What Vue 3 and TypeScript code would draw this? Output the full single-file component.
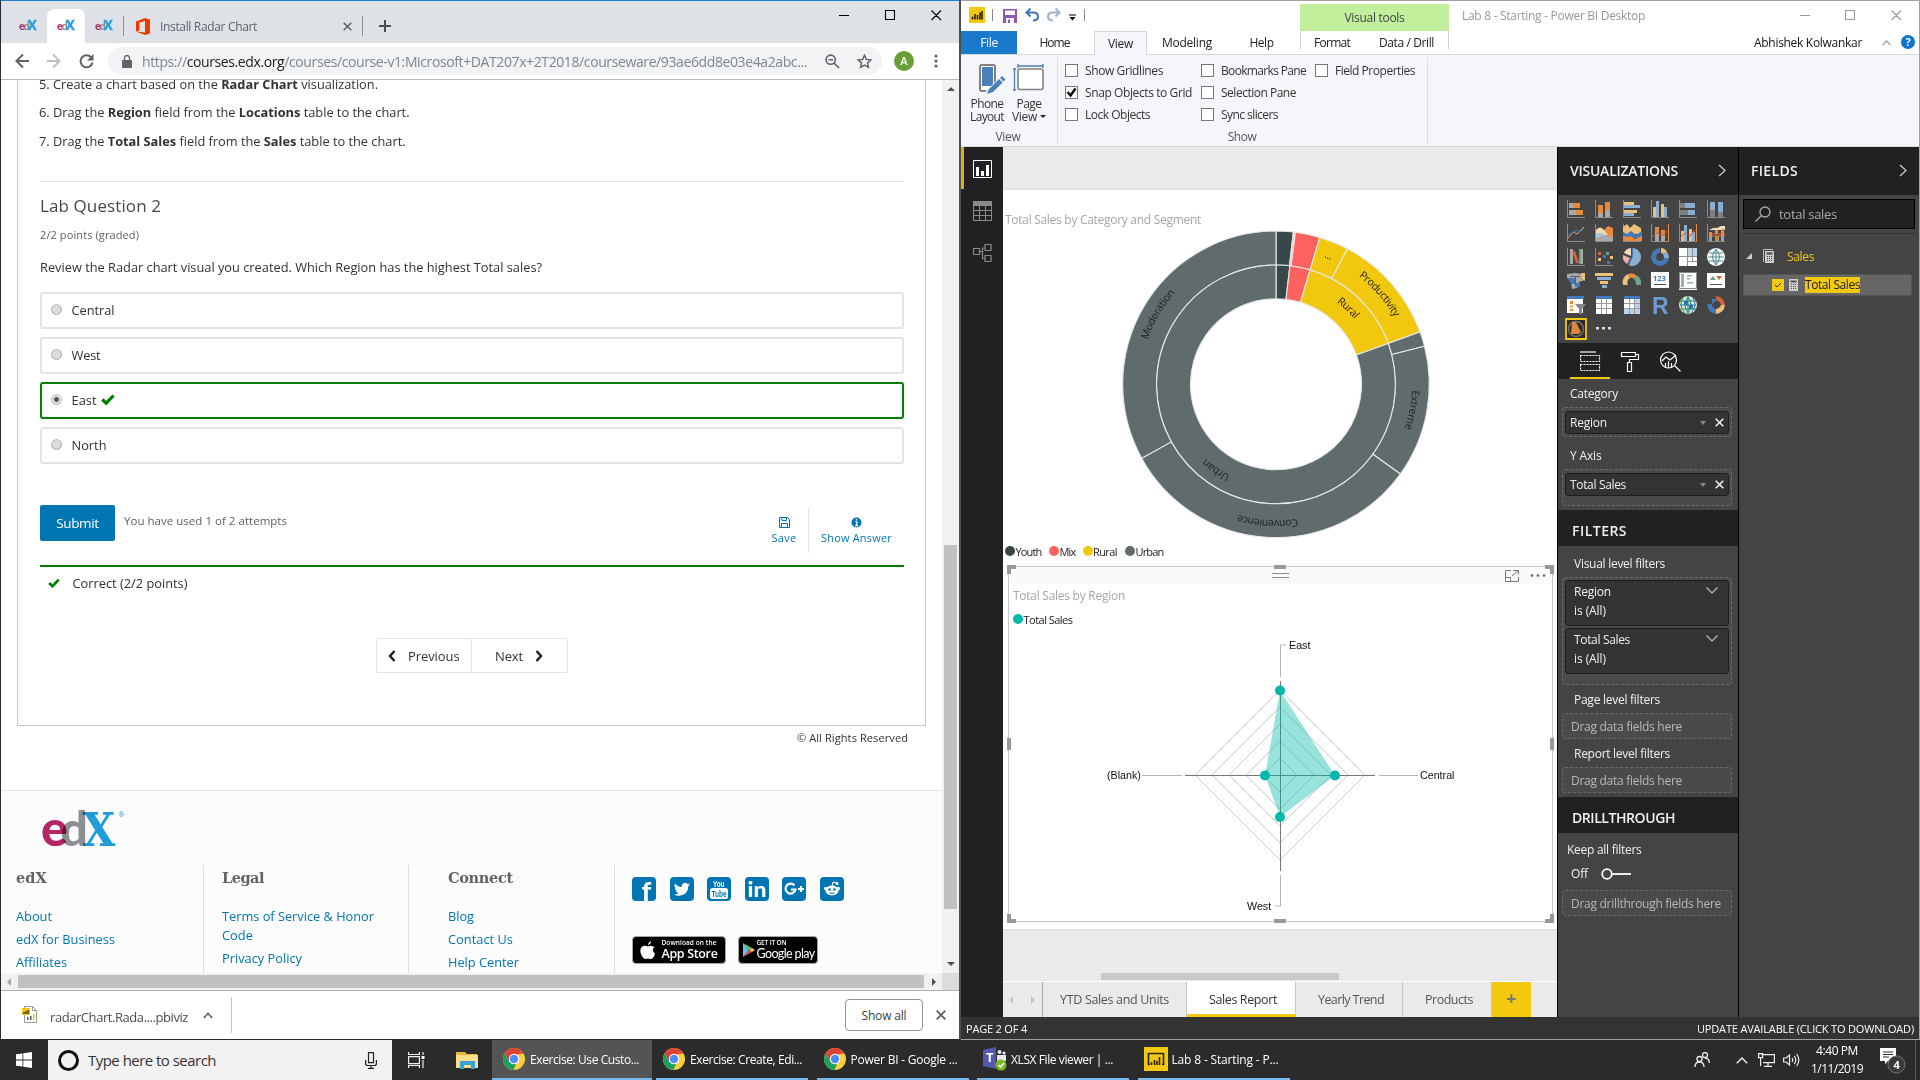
<script setup lang="ts">
type Shape = [kind: 'f' | 's', color: string, d: string]

// Spreads or tightens a label's tracking so that it takes the given width.
const vFit = {
  mounted(el: HTMLElement, binding: { value: number }) {
    const range = document.createRange()
    range.selectNodeContents(el)
    const natural = range.getBoundingClientRect().width
    const count = (el.textContent ?? '').trim().length
    if (count > 0) el.style.letterSpacing = `${((binding.value - natural) / count).toFixed(3)}px`
  },
}

const options = [
  { label: 'Central', width: 43, picked: false },
  { label: 'West', width: 29, picked: false },
  { label: 'East', width: 25, picked: true },
  { label: 'North', width: 35, picked: false },
]

const tasks = [
  { label: 'Exercise: Use Custo...', kind: 'browser', active: true, w: 160, t: 109 },
  { label: 'Exercise: Create, Edi...', kind: 'browser', active: false, w: 152, t: 112 },
  { label: 'Power BI - Google ...', kind: 'browser', active: false, w: 152, t: 107 },
  { label: 'XLSX File viewer | ...', kind: 'teams', active: false, w: 152, t: 102 },
  { label: 'Lab 8 - Starting - P...', kind: 'report', active: false, w: 152, t: 107 },
]

const ribbonChecks = [
  { w: 136, items: [
    { label: 'Show Gridlines', t: 78, on: false },
    { label: 'Snap Objects to Grid', t: 107, on: true },
    { label: 'Lock Objects', t: 65, on: false },
  ] },
  { w: 114, items: [
    { label: 'Bookmarks Pane', t: 85, on: false },
    { label: 'Selection Pane', t: 75, on: false },
    { label: 'Sync slicers', t: 57, on: false },
  ] },
  { w: 112, items: [{ label: 'Field Properties', t: 80, on: false }] },
]

const O = '#e8893c', G = '#a9a9a9', D = '#808080', Y = '#ecc079', B = '#8aaed2', K = '#4379b8', W = '#ffffff', R = '#d9603b', T = '#6fa287'
const axes: Shape = ['s', '#8c8c8c', 'M.5 0V17.5H18']

const vizIcons: Shape[][] = [
  [axes, ['f', G, 'M2 3h4v5H2zM2 10h7v5H2z'], ['f', O, 'M6 3h7v5H6zM9 10h7v5H9z']],
  [axes, ['f', G, 'M3 13h5v4H3zM10 10h5v7h-5z'], ['f', O, 'M3 5h5v8H3zM10 2h5v8h-5z']],
  [axes, ['f', Y, 'M1 2h10v3H1zM1 10h13v3H1z'], ['f', B, 'M1 5h16v3H1zM1 13h10v3H1z']],
  [axes, ['f', Y, 'M2 7h3v10H2zM10 4h3v13h-3z'], ['f', B, 'M5 1h3v16H5zM13 7h3v10h-3z']],
  [axes, ['f', D, 'M1 3h5v5H1zM1 10h8v5H1z'], ['f', B, 'M6 3h10v5H6zM9 10h7v5H9z']],
  [axes, ['f', D, 'M3 10h5v7H3zM11 12h5v5h-5z'], ['f', B, 'M3 2h5v8H3zM11 2h5v10h-5z']],

  [axes, ['s', '#e09a86', 'M1 14l5-6 4 2 7-7'], ['s', K, 'M1 11l5-3 4-2 3 2 4-4']],
  [axes, ['f', O, 'M9 6l4-4 5 2v9H9z'], ['f', '#f4d9b0', 'M1 6q4-5 8 0l4 5H1z'], ['f', '#a9c7e4', 'M1 10q6-3 10 2l7 5H1z'], ['f', G, 'M1 14l9-3 8 2v4H1z']],
  [axes, ['f', Y, 'M0 3l4-3 3 4 4-4 7 4v6H0z'], ['f', K, 'M0 8l4 2 4-3 5 4 6-4v7H0z'], ['f', O, 'M0 12l5 1 3-1 4 3 7-3v5H0z']],
  [axes, ['f', G, 'M4 9h4v8H4zM10 12h4v5h-4z'], ['f', O, 'M4 3h4v6H4zM10 6h4v6h-4zM17 0h1v18h-1z'], ['s', '#cc5a3a', 'M1 13l5-4 5 3 5-5']],
  [axes, ['f', Y, 'M2 7h3v10H2zM10 5h3v12h-3z'], ['f', B, 'M5 1h3v16H5zM13 8h3v9h-3z'], ['f', O, 'M17 0h1v18h-1z'], ['s', '#cc5a3a', 'M1 14l5-5 5 3 5-6']],
  [axes, ['f', '#f0dcc0', 'M2 6l4-2h4l4-2h4v4H2z'], ['f', '#8c5a46', 'M2 9h16v4H2z'], ['f', O, 'M2 8h3v5H2zM8 6h3v4H8zM14 5h3v7h-3z'], ['f', '#7fa8cf', 'M2 13h3v4H2zM14 12h3v5h-3z'], ['f', '#c9893f', 'M8 12h4v5H8z']],

  [axes, ['f', G, 'M3 1h3v15H3z'], ['f', R, 'M5 3h3l4 12H9z'], ['f', T, 'M12 1h2v15h-2z'], ['f', G, 'M14 1h2v15h-2z']],
  [axes, ['f', R, 'M3 4h3v3H3z'], ['f', T, 'M11 4h3v3h-3z'], ['f', Y, 'M3 10h3v3H3zM15 8h3v3h-3z'], ['f', K, 'M8 7h3v3H8zM12 13h3v3h-3z']],
  [['f', B, 'M9 0a9 9 0 1 1-3 17.500L9 9z'], ['f', '#f3dcb6', 'M8 0v8L1 5a8 8 0 0 1 7-5z'], ['f', '#ecb3a5', 'M0 7l7 3-3 6a9 9 0 0 1-4-9z'], ['f', K, 'M9 0h1v9L5 17l-1-1 5-7z']],
  [['f', K, 'M9 0v5a4 4 0 1 0 4 5h5A9 9 0 1 1 9 0z'], ['f', Y, 'M10 0q4 0 6 4l-4 2q-1-1-2-1z'], ['f', B, 'M16 4q2 3 2 6h-5q0-2-1-4z']],
  [['f', W, 'M0 0h18v18H0z'], ['f', '#bcd3ea', 'M8 0h10v8H8z'], ['s', '#8f8f8f', 'M8.5 0v18M0 8.500h18M13.500 0v13M8 13.500h10']],
  [['f', W, 'M9 0a9 9 0 1 1 0 18A9 9 0 1 1 9 0z'], ['s', '#4d8a8f', 'M9 1v16M1 9h16M2 5h14M2 13h14M9 1Q2 9 9 17Q16 9 9 1']],

  [['f', G, 'M0 2l8-1 8 1 2 6-6 2-2 6-5 1-1-8-4-3z'], ['f', K, 'M1 6h7v6H4zM8 11h5v4H8z'], ['f', Y, 'M14 1h4v8l-3-2z'], ['f', '#5b5b5b', 'M3 4h10v1H3zM8 5h1v8H8z']],
  [['f', Y, 'M0 1h18v3H0zM5 9h8v3H5z'], ['f', B, 'M2 5h14v3H2zM7 13h5v3H7z']],
  [['f', Y, 'M0 13A9 9 0 0 1 5 2l2 4a5 5 0 0 0-2 7z'], ['f', O, 'M5 2q5-2 9 2l-3 3q-2-2-4-1z'], ['f', T, 'M14 3q5 4 4 10h-5q0-4-2-6z']],
  [['f', W, 'M0 0h18v16H0z'], ['f', '#4a4a4a', 'M3 12h12v1H3z']],
  [['f', W, 'M0 0h18v18H0z'], ['f', G, 'M2 2h3v13H2z'], ['f', B, 'M8 3h5v1.500H8zM8 6h3v1.500H8zM8 10h6v1.500H8z'], ['s', '#888', 'M.5.5h17v16H.5z']],
  [['f', W, 'M0 1h18v15H0z'], ['f', T, 'M3 8l3-4 3 4z'], ['f', R, 'M9 4h6l-3 4z'], ['f', '#555', 'M3 12h12v1H3z']],

  [['f', W, 'M0 0h16v17H0z'], ['f', K, 'M0 0h17v3H0z'], ['f', O, 'M3 5h3v3H3zM3 13h3v2H3z'], ['f', Y, 'M3 9h3v3H3z'], ['f', '#888', 'M8 8h11l-4 5v5h-3v-5z']],
  [['f', W, 'M1 0h16v18H1z'], ['f', K, 'M1 0h16v3H1z'], ['s', '#9a9a9a', 'M1 7.500h16M1 12.500h16M6.500 3v15M11.500 3v15']],
  [['f', W, 'M1 0h16v18H1z'], ['f', K, 'M1 0h16v3H1z'], ['f', '#bcd3ea', 'M12 3h5v15H1v-5h11z'], ['s', '#9a9a9a', 'M1 7.500h16M1 12.500h16M6.500 3v15M11.500 3v15']],
  [],
  [['f', '#d9ead8', 'M9 0a9 9 0 1 1 0 18A9 9 0 1 1 9 0z'], ['s', '#2f8f4f', 'M9 0v18M1 5h16M1 13h16M4 2q-5 8 2 15'], ['s', '#2c75b5', 'M1 9h16M9 1Q3 9 9 17Q15 9 9 1M14 2q5 8-2 15'], ['f', '#2c75b5', 'M5 5h4v4H5zM10 9h4v4h-4z']],
  [['f', R, 'M9 0q8 1 9 9l-4 0q-1-4-5-5z'], ['f', K, 'M11 3h-6v5zM0 8h5q0 4 4 5v5Q1 17 0 8z'], ['f', Y, 'M14 9h4q-1 8-9 9v-5q4-1 5-4z']],
]

const CX = 273
const CY = 156.300
const point = (r: number, deg: number) => {
  const a = (deg * Math.PI) / 180
  return `${(CX + r * Math.sin(a)).toFixed(2)} ${(CY - r * Math.cos(a)).toFixed(2)}`
}
const ringSlice = (r0: number, r1: number, a0: number, a1: number) => {
  const large = a1 - a0 > 180 ? 1 : 0
  return `M${point(r1, a0)}A${r1} ${r1} 0 ${large} 1 ${point(r1, a1)}L${point(r0, a1)}A${r0} ${r0} 0 ${large} 0 ${point(r0, a0)}Z`
}
const slate = '#5f6b6d', dark = '#374649', coral = '#fd625e', gold = '#f2c80f'
const inner = [
  { from: 0, to: 6.7, color: dark, label: '' },
  { from: 6.7, to: 16.6, color: coral, label: '' },
  { from: 16.6, to: 70, color: gold, label: 'Rural' },
  { from: 70, to: 360, color: slate, label: 'Urban' },
]
const outer = [
  { from: 0, to: 6.5, color: dark, label: '' },
  { from: 6.5, to: 7.3, color: '#fbb', label: '' },
  { from: 7.3, to: 16.6, color: coral, label: '' },
  { from: 16.6, to: 27.8, color: gold, label: '...' },
  { from: 27.8, to: 70, color: gold, label: 'Productivity' },
  { from: 70, to: 75.6, color: slate, label: '' },
  { from: 75.6, to: 125.8, color: slate, label: 'Extreme' },
  { from: 125.8, to: 241.2, color: slate, label: 'Convenience' },
  { from: 241.2, to: 360, color: slate, label: 'Moderation' },
]
const slices = [
  ...inner.map((s, i) => ({ ...s, id: `in${i}`, d: ringSlice(85.5, 119.5, s.from, s.to), r: 102 })),
  ...outer.map((s, i) => ({ ...s, id: `out${i}`, d: ringSlice(119.5, 153.3, s.from, s.to), r: 136 })),
]
const labelArc = (s: { from: number; to: number; r: number }) => {
  const mid = (s.from + s.to) / 2
  return `M${point(s.r, mid - 60)}A${s.r} ${s.r} 0 0 1 ${point(s.r, mid + 60)}`
}
const labelled = slices.filter((s) => s.label)

const legend = [
  { label: 'Youth', color: dark, w: 26, gap: 7.5 },
  { label: 'Mix', color: coral, w: 16, gap: 7 },
  { label: 'Rural', color: gold, w: 24, gap: 8 },
  { label: 'Urban', color: slate, w: 28, gap: 0 },
]

const rings = [17, 34, 51, 68, 85]
const pages = [
  { label: 'YTD Sales and Units', w: 144, t: 109, active: false },
  { label: 'Sales Report', w: 109, t: 68, active: true },
  { label: 'Yearly Trend', w: 107, t: 66, active: false },
  { label: 'Products', w: 89, t: 48, active: false },
]
const footerCols = [
  { title: 'edX', tw: 31, cls: 'c1', links: [['About', 36], ['edX for Business', 99], ['Affiliates', 51]] },
  { title: 'Legal', tw: 42, cls: 'c2', links: [['Terms of Service & Honor', 152], ['Code', 31], ['Privacy Policy', 80]] },
  { title: 'Connect', tw: 65, cls: 'c3', links: [['Blog', 26], ['Contact Us', 65], ['Help Center', 71]] },
] as { title: string; tw: number; cls: string; links: [string, number][] }[]
</script>

<template>
  <div class="desktop">
    <div class="windows">
      <section class="chrome">
        <div class="tabstrip">
          <div v-for="n in 3" :key="n" class="fav" :class="{ on: n === 2 }">
            <svg width="20" height="16" viewBox="0 0 20 16"><text x="5.500" y="12" class="fd">d</text><text x="1" y="12" class="fe">e</text><text x="10" y="12" class="fx">X</text></svg>
          </div>
          <i class="tsep"></i>
          <svg class="office" width="14" height="17" viewBox="0 0 14 17"><path fill="#eb3c00" d="M0 3.500L9 0l5 1.500v14L9 17 0 13.500l9 1V3L3.500 4.500v8L0 13.500z" /></svg>
          <span v-fit="97" class="ttitle">Install Radar Chart</span>
          <svg class="tclose" width="9" height="9" viewBox="0 0 9 9"><path d="M.7.700l7.600 7.600M8.300.7L.7 8.300" stroke="#5f6368" stroke-width="1.500" /></svg>
          <i class="tsep two"></i>
          <svg class="tplus" width="12" height="12" viewBox="0 0 12 12"><path d="M6 0v12M0 6h12" stroke="#4a4d51" stroke-width="2" /></svg>
          <svg class="wctl" width="104" height="12" viewBox="0 0 104 12"><path d="M1 6.500h10M47.500 1.500h9v9h-9zM93.500 1.500l9.500 9.500M103 1.500L93.500 11" fill="none" stroke="#000" stroke-width="1.100" /></svg>
        </div>
        <div class="toolbar">
          <svg class="nav" width="80" height="16" viewBox="0 0 80 16" fill="none" stroke-width="2">
            <path stroke="#5f6368" d="M14 8H2M8 1.500L1.500 8 8 14.500" />
            <path stroke="#bdc1c6" d="M32 8h12M38 1.500L44.500 8 38 14.500" />
            <path stroke="#5f6368" d="M76 4.200A6 6 0 1 0 77.500 9.500" /><path fill="#5f6368" d="M78.500 1v6.500H72z" />
          </svg>
          <div class="omni">
            <svg width="10" height="13" viewBox="0 0 10 13"><path fill="#5f6368" d="M1 5h8q1 0 1 1v6q0 1-1 1H1q-1 0-1-1V6q0-1 1-1z" /><path d="M2.500 5V3a2.500 2.500 0 0 1 5 0v2" fill="none" stroke="#5f6368" stroke-width="1.300" /></svg>
            <span v-fit="665" class="url">https://<b>courses.edx.org</b>/courses/course-v1:Microsoft+DAT207x+2T2018/courseware/93ae6dd8e03e4a2abc...</span>
            <svg class="zo" width="15" height="15" viewBox="0 0 15 15" fill="none" stroke="#5f6368" stroke-width="1.600"><circle cx="5.700" cy="5.700" r="4.600" /><path d="M9 9l5 5M3.500 5.700h4.500" /></svg>
            <svg class="st" width="15" height="15" viewBox="0 0 15 15"><path d="M7.500 1.300l1.900 4.100 4.400.5-3.300 3 .9 4.400-3.900-2.200-3.900 2.200.9-4.400-3.300-3 4.400-.5z" fill="none" stroke="#5f6368" stroke-width="1.500" /></svg>
          </div>
          <span class="avatar">A</span>
          <svg class="dots" width="4" height="14" viewBox="0 0 4 14" fill="#5f6368"><circle cx="2" cy="2" r="1.600" /><circle cx="2" cy="7" r="1.600" /><circle cx="2" cy="12" r="1.600" /></svg>
        </div>
        <div class="viewport">
          <div class="page">
            <div class="frame">
              <p class="li first"><span v-fit="339">5. Create a chart based on the <b>Radar Chart</b> visualization.</span></p>
              <p class="li"><span v-fit="370.500">6. Drag the <b>Region</b> field from the <b>Locations</b> table to the chart.</span></p>
              <p class="li"><span v-fit="366.500">7. Drag the <b>Total Sales</b> field from the <b>Sales</b> table to the chart.</span></p>
              <div class="hr"></div>
              <h3><span v-fit="121">Lab Question 2</span></h3>
              <p class="pts"><span v-fit="99">2/2 points (graded)</span></p>
              <p class="q"><span v-fit="502">Review the Radar chart visual you created. Which Region has the highest Total sales?</span></p>
              <div class="opts">
                <label v-for="o in options" :key="o.label" class="opt" :class="{ right: o.picked }">
                  <i class="radio"></i><span v-fit="o.width">{{ o.label }}</span>
                  <svg v-if="o.picked" width="14" height="11" viewBox="0 0 14 11"><path d="M1.300 5.500l3.900 3.700L12.500 1.500" fill="none" stroke="#008100" stroke-width="3.200" /></svg>
                </label>
              </div>
              <div class="actions">
                <button class="submit"><span v-fit="42.500">Submit</span></button>
                <span v-fit="163" class="used">You have used 1 of 2 attempts</span>
                <div class="act save">
                  <svg width="11" height="11" viewBox="0 0 11 11" fill="none" stroke="#0075b4"><path d="M.5.500h8l2 2v8H.5zM3 .5v3h4.500v-3M2.500 10.500v-4h6v4" /></svg>
                  <span v-fit="25">Save</span>
                </div>
                <div class="act show">
                  <svg width="11" height="11" viewBox="0 0 11 11"><circle cx="5.500" cy="5.500" r="5" fill="#0075b4" /><path d="M5.500 2v1.600M4.300 4.900h1.500v3.600M4 8.700h3.200" stroke="#fff" stroke-width="1.300" /></svg>
                  <span v-fit="71">Show Answer</span>
                </div>
              </div>
              <div class="green"></div>
              <div class="correct">
                <svg width="12" height="10" viewBox="0 0 14 11"><path d="M1.300 5.500l3.900 3.700L12.500 1.500" fill="none" stroke="#008100" stroke-width="3.200" /></svg>
                <span v-fit="115">Correct (2/2 points)</span>
              </div>
              <div class="pager">
                <div class="pg"><svg width="8" height="12" viewBox="0 0 8 12"><path d="M6.500 1L2 6l4.500 5" fill="none" stroke="#222" stroke-width="2.500" /></svg><span v-fit="51.500" class="pv">Previous</span></div>
                <div class="pg nx"><span v-fit="28">Next</span><svg width="8" height="12" viewBox="0 0 8 12"><path d="M1.500 1L6 6l-4.500 5" fill="none" stroke="#222" stroke-width="2.500" /></svg></div>
              </div>
            </div>
            <p class="copy"><span v-fit="111">© All Rights Reserved</span></p>
            <footer>
              <svg class="logo" width="84" height="36" viewBox="0 0 84 36">
                <text class="ld" transform="translate(18.500 35)">d</text>
                <text class="le" transform="translate(-1 35)">e</text>
                <text class="lx" transform="translate(40.500 34.500) scale(.9 1)">X</text>
                <text x="76.500" y="6" class="lr">®</text>
              </svg>
              <div class="cols">
                <div v-for="c in footerCols" :key="c.title" class="col" :class="c.cls">
                  <h4><span v-fit="c.tw">{{ c.title }}</span></h4>
                  <a v-for="l in c.links" :key="l[0]" :class="{ wrap: l[0] === 'Code' }"><span v-fit="l[1]">{{ l[0] }}</span></a>
                </div>
                <div class="social">
                  <div class="icons">
                    <svg viewBox="0 0 24 24"><rect width="24" height="24" rx="4" /><text x="9.500" y="24" class="sf">f</text></svg>
                    <svg viewBox="0 0 24 24"><rect width="24" height="24" rx="4" /><path fill="#fff" d="M20 7.300q-1 .5-1.900.5 1-.6 1.400-1.700-1 .6-2.100.8A3.300 3.300 0 0 0 11.800 10Q7.500 9.700 5 6.500q-1.500 2.800 1 4.400-.7 0-1.400-.4 0 2.500 2.600 3.300-.7.200-1.400 0 .8 2.100 3 2.300Q7 17.700 4 17.400q2.500 1.600 5.500 1.400 8.500-.8 8.900-9.700 1-.8 1.600-1.800z" /></svg>
                    <svg viewBox="0 0 24 24"><rect width="24" height="24" rx="4" /><text x="6" y="9.500" class="yt" textLength="11.500" lengthAdjust="spacingAndGlyphs">You</text><rect x="3" y="11" width="18" height="11" rx="2.500" class="w" /><text x="4.500" y="20" class="yt b" textLength="15" lengthAdjust="spacingAndGlyphs">Tube</text></svg>
                    <svg viewBox="0 0 24 24"><rect width="24" height="24" rx="4" /><text x="2.500" y="20" class="li-t" textLength="19" lengthAdjust="spacingAndGlyphs">in</text></svg>
                    <svg viewBox="0 0 24 24"><rect width="24" height="24" rx="4" /><path d="M12.500 8.500A5 5 0 1 0 13.500 12.600H9M16 12h6M19 9v6" stroke="#fff" stroke-width="2.200" fill="none" /></svg>
                    <svg viewBox="0 0 24 24"><rect width="24" height="24" rx="4" /><ellipse cx="12" cy="13.500" rx="6.500" ry="5" class="w" /><circle cx="5.800" cy="11.500" r="1.800" class="w" /><circle cx="18.200" cy="11.500" r="1.800" class="w" /><circle cx="17" cy="6.500" r="1.500" class="w" /><path d="M12 9l1-4 4 1.300" fill="none" stroke="#fff" /><circle cx="9.600" cy="12.500" r="1.300" /><circle cx="14.400" cy="12.500" r="1.300" /><path d="M9.500 15.800q2.500 1.500 5 0" stroke="#0075b4" fill="none" /></svg>
                  </div>
                  <div class="stores">
                    <div class="store apple">
                      <svg width="16" height="19" viewBox="0 0 16 19"><path fill="#fff" d="M11 0q.2 3-3 4.300Q8 1.500 11 0zM8 5.500q3.500-2 6.500.8-3.500 2.700.5 6.200-1.800 6.300-5 5.500-2-1-4 0Q3 18 1 13-1 7 3 5q2-.7 5 .5z" /></svg>
                      <div><small v-fit="55">Download on the</small><strong v-fit="56">App Store</strong></div>
                    </div>
                    <div class="store play">
                      <svg width="13" height="14" viewBox="0 0 13 14"><path fill="#5bc8e8" d="M1 0l6 7-6 7z" /><path fill="#6fc06f" d="M1 0l9 5-3 2z" /><path fill="#e9505c" d="M1 14l9-5-3-2z" /><path fill="#f6c14b" d="M10 5l3 2-3 2-3-2z" /></svg>
                      <div><small v-fit="30">GET IT ON</small><strong v-fit="58">Google play</strong></div>
                    </div>
                  </div>
                </div>
              </div>
            </footer>
          </div>
          <div class="vbar"><i class="up"></i><i class="vthumb"></i><i class="down"></i></div>
        </div>
        <div class="hbar"><i class="lf"></i><i class="hthumb"></i><i class="rt"></i><i class="corner"></i></div>
        <div class="downloads">
          <svg class="pbfile" width="16" height="17" viewBox="0 0 16 17"><path d="M2.500.500h8l4 4v12h-12z" fill="#fff" stroke="#999" /><path d="M10.500.5v4h4" fill="none" stroke="#999" /><path fill="#555" d="M5 11h1.500v3H5zM8 10h1.500v4H8z" /><path fill="#f2c811" d="M11 8h1.500v6H11zM0 2h8v7H0z" /><path d="M2 8V6M4 8V5M6 8V4" stroke="#000" /></svg>
          <span v-fit="138" class="dl">radarChart.Rada....pbiviz</span>
          <svg class="caret" width="10" height="7" viewBox="0 0 10 7"><path d="M.8 6L5 1.500 9.200 6" fill="none" stroke="#5f6368" stroke-width="1.700" /></svg>
          <i class="dsep"></i>
          <button class="showall"><span v-fit="45">Show all</span></button>
          <svg width="10" height="10" viewBox="0 0 10 10"><path d="M.7.700l8.600 8.600M9.300.7L.7 9.300" stroke="#5f6368" stroke-width="1.900" /></svg>
        </div>
      </section>

      <section class="pbi">
        <div class="title">
          <svg class="qa" width="124" height="20" viewBox="0 0 124 20">
            <rect x="8" y="1" width="16" height="16" fill="#f2c811" /><path d="M11.500 13.500v-3M14 13.500V8M16.500 13.500V9M19 13.500V6.500M21 13.500V5" stroke="#2b2000" stroke-width="1.600" />
            <path d="M31.500 3v12M123.500 3v12" stroke="#888" />
            <path fill="#8f57b5" d="M42 3h14v14H42z" /><path fill="#fff" d="M44 4.500h10V9H44zM45 12h8v5h-8z" /><path fill="#8f57b5" d="M47 13.500h2V17h-2z" />
            <g fill="none" stroke-width="2"><path stroke="#3f78b5" d="M65 6.500h7q5 0 5 4t-5 4M69.500 2.500l-4 4 4 4" /><path stroke="#9fb0ca" d="M99 6.500h-7q-5 0-5 4t5 4M94.500 2.500l4 4-4 4" /></g>
            <path d="M108 9h7" stroke="#000" /><path d="M108.500 11h6l-3 3.500z" />
          </svg>
          <div class="vt"><span v-fit="60">Visual tools</span></div>
          <span v-fit="183" class="cap">Lab 8 - Starting - Power BI Desktop</span>
          <svg class="wctl2" width="104" height="12" viewBox="0 0 104 12"><path d="M1 6.500h10M46.500 1.500h9v9h-9zM92.500 1.500l9.500 9.500M102 1.500L92.500 11" fill="none" stroke="#999" stroke-width="1.100" /></svg>
        </div>
        <nav class="rtabs">
          <div class="file"><span v-fit="17.500">File</span></div>
          <div class="rt1"><span v-fit="30">Home</span></div>
          <div class="rt2"><span v-fit="25">View</span></div>
          <div class="rt3"><span v-fit="50">Modeling</span></div>
          <div class="rt4"><span v-fit="24">Help</span></div>
          <div class="rt5"><span v-fit="36">Format</span><span v-fit="55">Data / Drill</span></div>
          <div class="user"><span v-fit="108">Abhishek Kolwankar</span>
            <svg width="9" height="6" viewBox="0 0 9 6"><path d="M.5 5L4.500 1l4 4" fill="none" stroke="#aaa" stroke-width="1.500" /></svg>
            <i>?</i>
          </div>
        </nav>
        <div class="ribbon">
          <div class="group g1">
            <div class="tools">
              <div class="tool t1">
                <svg width="28" height="33" viewBox="0 0 28 33"><rect x="2" y="2" width="15" height="26" rx="2" fill="#fff" stroke="#808080" stroke-width="2" /><path fill="#4a7fb8" d="M4 4h11v19H4z" /><path d="M10 31L25 16" stroke="#f4f6f9" stroke-width="7" /><path d="M9 31l2-5 4 3zM11 26L21 16l3.500 3.500L15 29zM22 15l2-2 3.500 3.500-2 2z" fill="#4a7fb8" /></svg>
                <span v-fit="33">Phone</span><span v-fit="34">Layout</span>
              </div>
              <div class="tool t2">
                <svg width="31" height="33" viewBox="0 0 31 33"><rect x="5" y="6" width="25" height="20.500" rx="2" fill="#fff" stroke="#808080" stroke-width="1.600" /><path d="M5 3h25M5 1v4M30 1v4M1.500 6v21M0 6h3M0 27h3" stroke="#4a7fb8" stroke-width="1.300" /></svg>
                <span v-fit="25">Page</span><span><em v-fit="25">View</em> <i class="tri"></i></span>
              </div>
            </div>
            <div class="gname"><span v-fit="25">View</span></div>
          </div>
          <div class="group g2">
            <div class="checks">
              <div v-for="(c, i) in ribbonChecks" :key="i" :style="{ width: c.w + 'px' }">
                <div v-for="k in c.items" :key="k.label" class="ck">
                  <i><svg v-if="k.on" width="11" height="11" viewBox="0 0 11 11"><path d="M1.500 5l3 3.500L9.500 1.500" fill="none" stroke="#111" stroke-width="2.500" /></svg></i>
                  <span v-fit="k.t">{{ k.label }}</span>
                </div>
              </div>
            </div>
            <div class="gname"><span v-fit="28.500">Show</span></div>
          </div>
        </div>
        <div class="work">
          <aside class="rail">
            <i class="mark"></i>
            <svg width="19" height="18" viewBox="0 0 19 18"><path d="M.5.500h18v17H.5z" fill="none" stroke="#fff" /><path fill="#fff" d="M3 7h3v9H3zM8 11h3v5H8zM13 5h3v11h-3z" /></svg>
            <svg width="19" height="20" viewBox="0 0 19 20"><path d="M.5.500h18v19H.5zM.5 9.500h18M.5 14.500h18M6.500 4v16M12.500 4v16" fill="none" stroke="#8a8a8a" /><path fill="#8a8a8a" d="M0 0h19v5H0z" /></svg>
            <svg width="19" height="18" viewBox="0 0 19 18"><path d="M.5 4.500h6v6h-6zM12 .5h6v6h-6zM12 11.500h6v6h-6zM6.500 7.500h3M9.500 4v10.500H12M9.500 4H12" fill="none" stroke="#8a8a8a" stroke-width="1.200" /></svg>
          </aside>
          <main>
            <div class="canvas">
              <div class="sheet">
                <div class="vtitle"><span v-fit="196">Total Sales by Category and Segment</span></div>
                <svg class="donut" width="554" height="313" viewBox="0 0 554 313">
                  <path v-for="s in slices" :key="s.id" :d="s.d" :fill="s.color" stroke="#e6e9e9" stroke-width="1.100" />
                  <g v-for="s in labelled" :key="'t' + s.id">
                    <path :id="'arc-' + s.id" :d="labelArc(s)" fill="none" />
                    <text class="arc"><textPath :href="'#arc-' + s.id" startOffset="50%">{{ s.label }}</textPath></text>
                  </g>
                </svg>
                <div class="legend">
                  <template v-for="l in legend" :key="l.label">
                    <i :style="{ background: l.color }"></i><span v-fit="l.w" :style="{ marginRight: l.gap + 'px' }">{{ l.label }}</span>
                  </template>
                </div>
                <div class="sel">
                  <i v-for="h in ['tl', 'tc', 'tr', 'ml', 'mr', 'bl', 'bc', 'br']" :key="h" class="h" :class="h"></i>
                  <div class="shead">
                    <svg class="grip" width="17" height="6" viewBox="0 0 17 6"><path d="M0 .5h17M0 4.500h17" stroke="#8a8a8a" /></svg>
                    <svg class="focus" width="14" height="12" viewBox="0 0 14 12"><path d="M6 .5H.5v11h13V7M8 .5h5.500v4M13 1L7 6M.5 7.500h5v4" fill="none" stroke="#777" /></svg>
                    <svg width="16" height="3" viewBox="0 0 16 3" fill="#666"><circle cx="2" cy="1.500" r="1.300" /><circle cx="8" cy="1.500" r="1.300" /><circle cx="14" cy="1.500" r="1.300" /></svg>
                  </div>
                  <div class="vtitle s"><span v-fit="112">Total Sales by Region</span></div>
                  <div class="legend s"><i class="teal"></i><span v-fit="49">Total Sales</span></div>
                  <svg class="radar" width="542" height="290" viewBox="1009 631 542 290">
                    <path v-for="r in rings" :key="r" :d="`M1280 ${775 - r}L${1280 + r} 775L1280 ${775 + r}L${1280 - r} 775Z`" fill="none" stroke="#bdbdbd" stroke-width=".8" />
                    <path d="M1185 775.500h190M1280.500 681v190" stroke="#777" />
                    <path d="M1280.500 677v-32h6M1280.500 875v31h-6M1379 775.500h39M1142 775.500h40" fill="none" stroke="#b5b5b5" />
                    <path d="M1280 690.500L1335 775.500L1280 817L1265 775.500Z" fill="#01b8aa" fill-opacity=".4" />
                    <g fill="#01b8aa"><circle cx="1280" cy="690.500" r="5" /><circle cx="1335" cy="775.500" r="5" /><circle cx="1280" cy="817" r="5" /><circle cx="1265" cy="775.500" r="5" /></g>
                    <g class="rl"><text x="1289" y="649">East</text><text x="1420" y="779">Central</text><text x="1107" y="779">(Blank)</text><text x="1247" y="910">West</text></g>
                  </svg>
                </div>
              </div>
              <i class="cthumb"></i>
            </div>
            <div class="pages">
              <div class="arrows"><i class="al"></i><i class="ar"></i></div>
              <div v-for="p in pages" :key="p.label" class="pt" :class="{ on: p.active }" :style="{ width: p.w + 'px' }"><span v-fit="p.t">{{ p.label }}</span></div>
              <div class="add">+</div>
            </div>
          </main>
          <aside class="pane viz">
            <header><span v-fit="108">VISUALIZATIONS</span><svg width="8" height="13" viewBox="0 0 8 13"><path d="M1 1l6 5.500L1 12" fill="none" stroke="#ccc" stroke-width="1.300" /></svg></header>
            <div class="grid">
              <svg v-for="(shapes, i) in vizIcons" :key="i" width="18" height="18" viewBox="0 0 18 18" overflow="visible">
                <path v-for="(s, j) in shapes" :key="j" :d="s[2]" :fill="s[0] === 'f' ? s[1] : 'none'" :stroke="s[0] === 's' ? s[1] : 'none'" />
                <text v-if="i === 21" x="2" y="9" class="n123">123</text>
                <text v-if="i === 27" x="1" y="17.500" class="rr">R</text>
              </svg>
              <svg class="cur" width="22" height="22" viewBox="0 0 22 22"><path d="M1 1h20v20H1z" fill="#2b2b2b" stroke="#f2c811" stroke-width="1.800" /><circle cx="11" cy="11" r="7.500" fill="none" stroke="#777" stroke-width="1.300" /><path d="M7 4q4-1 5 2l4 8-2 2H6z" fill="#e0853f" /></svg>
              <svg class="more" width="18" height="3" viewBox="0 0 18 3"><path d="M1 0h3v2.500H1zM7 0h3v2.500H7zM13 0h3v2.500h-3z" fill="#ddd" /></svg>
            </div>
            <div class="vtabs">
              <svg width="102" height="22" viewBox="0 0 102 22" fill="none" stroke="#fff" stroke-width="1.200">
                <path d="M0 1h16" /><path d="M.5 4.500h19v6H.5zM.5 13.500h19v6H.5z" stroke-dasharray="2 1" />
                <path d="M41.500 1.500h14v4h-14zM55.500 3.500h3v5h-9v3M47.500 11.500h4v9h-4z" />
                <circle cx="88.500" cy="9" r="8" /><path d="M94.500 14.500l6 6M82 10l4-4 4 3 6-5M85.500 12v4M88.500 10v7M91.500 12v4" />
              </svg>
              <i></i>
            </div>
            <div class="wells">
              <div class="wl"><span v-fit="48">Category</span></div>
              <div class="dash d1"><div class="chip"><span v-fit="37">Region</span><i></i><svg width="9" height="9" viewBox="0 0 9 9"><path d="M.7.700l7.600 7.600M8.300.7L.7 8.300" stroke="#eee" stroke-width="1.600" /></svg></div></div>
              <div class="wl y"><span v-fit="31.500">Y Axis</span></div>
              <div class="dash d2"><div class="chip"><span v-fit="56">Total Sales</span><i></i><svg width="9" height="9" viewBox="0 0 9 9"><path d="M.7.700l7.600 7.600M8.300.7L.7 8.300" stroke="#eee" stroke-width="1.600" /></svg></div></div>
            </div>
            <div class="sec"><span v-fit="55">FILTERS</span></div>
            <div class="filters">
              <div class="fl"><span v-fit="91">Visual level filters</span></div>
              <div class="dash d3">
                <div class="card"><div><span v-fit="37">Region</span><svg width="12" height="7" viewBox="0 0 12 7"><path d="M.5.500L6 6 11.500.5" fill="none" stroke="#bbb" stroke-width="1.200" /></svg></div><div><span v-fit="32">is (All)</span></div></div>
                <div class="card"><div><span v-fit="56">Total Sales</span><svg width="12" height="7" viewBox="0 0 12 7"><path d="M.5.500L6 6 11.500.5" fill="none" stroke="#bbb" stroke-width="1.200" /></svg></div><div><span v-fit="32">is (All)</span></div></div>
              </div>
              <div class="fl two"><span v-fit="86">Page level filters</span></div>
              <div class="dash drop"><span v-fit="111">Drag data fields here</span></div>
              <div class="fl two"><span v-fit="96">Report level filters</span></div>
              <div class="dash drop"><span v-fit="111">Drag data fields here</span></div>
            </div>
            <div class="sec dr"><span v-fit="103">DRILLTHROUGH</span></div>
            <div class="drill">
              <div class="keep"><span v-fit="74.500">Keep all filters</span></div>
              <div class="off"><span v-fit="17">Off</span><svg width="31" height="12" viewBox="0 0 31 12"><circle cx="6" cy="6" r="4.800" fill="none" stroke="#fff" stroke-width="1.800" /><path d="M11 6h19" stroke="#fff" stroke-width="1.800" /></svg></div>
              <div class="dash drop"><span v-fit="150">Drag drillthrough fields here</span></div>
            </div>
          </aside>
          <aside class="pane fields">
            <header><span v-fit="47">FIELDS</span><svg width="8" height="13" viewBox="0 0 8 13"><path d="M1 1l6 5.500L1 12" fill="none" stroke="#ccc" stroke-width="1.300" /></svg></header>
            <div class="search"><svg width="16" height="16" viewBox="0 0 16 16" fill="none" stroke="#aaa" stroke-width="1.300"><circle cx="10" cy="6" r="5" /><path d="M6.500 9.500L.5 15.500" /></svg><span v-fit="58">total sales</span></div>
            <div class="table"><i></i>
              <svg width="12" height="14" viewBox="0 0 12 14"><path d="M.5 13V.5H10" fill="none" stroke="#bbb" /><path fill="#ccc" d="M2 2h9v12H2z" /><path fill="#444" d="M3.500 3.500h6v2h-6zM4 7h1v1H4zM6 7h1v1H6zM8 7h1v1H8zM4 9h1v1H4zM6 9h1v1H6zM8 9h1v1H8zM4 11h1v1H4zM6 11h1v1H6zM8 11h1v1H8z" /></svg>
              <span v-fit="27">Sales</span></div>
            <div class="field">
              <svg width="12" height="12" viewBox="0 0 12 12"><path fill="#f2c811" d="M0 0h12v12H0z" /><path d="M3 6l2 2 4-4" fill="none" stroke="#333" /></svg>
              <svg width="9" height="12" viewBox="0 0 9 12"><path fill="#ccc" d="M0 0h9v12H0z" /><path fill="#555" d="M1.500 1.500h6v2h-6zM2 5h1v1H2zM4 5h1v1H4zM6 5h1v1H6zM2 7h1v1H2zM4 7h1v1H4zM6 7h1v1H6zM2 9h1v1H2zM4 9h1v1H4zM6 9h1v1H6z" /></svg>
              <mark v-fit="55">Total Sales</mark>
            </div>
          </aside>
        </div>
        <div class="status"><span v-fit="61">PAGE 2 OF 4</span><span v-fit="217">UPDATE AVAILABLE (CLICK TO DOWNLOAD)</span></div>
      </section>
    </div>

    <div class="taskbar">
      <svg class="win" width="16" height="16" viewBox="0 0 16 16" fill="#fff"><path d="M0 2.300L6.500 1.400v6.200H0zM7.300 1.300L16 0v7.600H7.300zM0 8.400h6.500v6.200L0 13.700zM7.300 8.400H16V16l-8.700-1.200z" /></svg>
      <div class="find"><i></i><span v-fit="128">Type here to search</span><svg width="12" height="17" viewBox="0 0 12 17" fill="none" stroke="#222" stroke-width="1.200"><path d="M3.500.600h5v10h-5zM.6 8v3.500q0 2 2 2h6.800q2 0 2-2V8M6 13.500v2.500M3 16.400h6" /></svg></div>
      <svg class="tv" width="17" height="16" viewBox="0 0 17 16" fill="none" stroke="#eee" stroke-width="1.200"><path d="M.6 0v2.500h10.800V0M.6 4.600h10.800v7H.6zM.6 16v-2.500h10.800V16M15 0v3M15 8v8" /><path fill="#fff" stroke="none" d="M13.500 4h3v3h-3z" /></svg>
      <svg class="ex" width="23" height="18" viewBox="0 0 23 18"><path fill="#e9b83c" d="M0 1h9l2 2h10v5H0z" /><path fill="#fbdf88" d="M0 4h22v13H0z" /><path fill="#35a3e0" d="M4 10h15v8h-4v-4H8v4H4z" /></svg>
      <div class="tasks">
        <div v-for="t in tasks" :key="t.label" class="task" :class="[t.kind, { active: t.active }]" :style="{ width: t.w + 'px' }">
          <svg v-if="t.kind === 'browser'" width="22" height="22" viewBox="0 0 22 22"><circle cx="11" cy="11" r="11" fill="#ffcd40" /><path fill="#db4437" d="M1.500 5.500A11 11 0 0 1 20.500 5.500L11 6 6.300 13.700z" /><path fill="#1aa15f" d="M1.500 5.500L6.300 13.700 13 16l-2.500 6A11 11 0 0 1 1.500 5.500z" /><path fill="#db4437" d="M11 5.500h9.500L11 7z" /><circle cx="11" cy="11" r="5.200" fill="#fff" /><circle cx="11" cy="11" r="4.200" fill="#4c8bf5" /></svg>
          <svg v-else-if="t.kind === 'teams'" width="24" height="24" viewBox="0 0 24 24"><path fill="#5558af" d="M0 3l13-3v22L0 19z" /><text x="3" y="15" class="tt">T</text><circle cx="16.500" cy="5" r="2" fill="#e8e8f8" /><circle cx="21" cy="6" r="1.600" fill="#e8e8f8" /><path fill="#e8e8f8" d="M14 8h9v6h-9z" /><circle cx="18" cy="18" r="5.500" fill="#7ab829" /><path d="M15.500 18l2 2 3.500-4" stroke="#fff" fill="none" stroke-width="1.500" /></svg>
          <svg v-else width="24" height="24" viewBox="0 0 24 24"><path fill="#f2c811" d="M0 0h24v24H0z" /><path d="M6 17.500H4.500v-11h15v11H18M7.500 18v-3M10.500 18v-5M13 18v-4M15.500 18v-8" fill="none" stroke="#2b2000" stroke-width="1.600" /></svg>
          <span v-fit="t.t">{{ t.label }}</span>
        </div>
      </div>
      <div class="tray">
        <svg width="16" height="16" viewBox="0 0 16 16" fill="none" stroke="#eee" stroke-width="1.300"><circle cx="5.500" cy="7" r="2.500" /><circle cx="11" cy="3" r="2.500" /><path d="M1 15q0-5 4.500-5T10 15M11 6q4 0 4.500 5" /></svg>
        <svg class="c" width="12" height="7" viewBox="0 0 12 7"><path d="M.8 6.300L6 1l5.200 5.300" fill="none" stroke="#eee" stroke-width="1.400" /></svg>
        <svg class="n" width="17" height="14" viewBox="0 0 17 14" fill="none" stroke="#eee" stroke-width="1.200"><path d="M3.500 1.600h12.900v8H5M10 9.600V13M6 13.400h8M.6.600h4v4h-4zM2.600 4.600V13" /></svg>
        <svg class="s" width="17" height="14" viewBox="0 0 17 14" fill="none" stroke="#eee" stroke-width="1.200"><path d="M.6 5h2.500L6.500 2v10L3.100 9H.6zM9 5q1.500 2 0 4M11.300 3q3 4 0 8M13.600 1q4.500 6 0 12" /></svg>
        <div class="clock"><span v-fit="42">4:40 PM</span><span v-fit="52">1/11/2019</span></div>
        <svg class="note" width="26" height="28" viewBox="0 0 26 28"><path fill="#fff" d="M0 2h16v13H8l-3 3v-3H0z" /><path d="M3 6h10M3 8.500h10M3 11h6" stroke="#2b2b2b" /><circle cx="16.500" cy="18.500" r="8.500" fill="#3a3a3a" stroke="#777" /><text x="13.500" y="23" class="nt">4</text></svg>
        <i class="peek"></i>
      </div>
    </div>
  </div>
</template>

<style>
body { margin: 0; overflow: hidden; }
</style>

<style scoped>
* { box-sizing: border-box; }
.desktop { width: 1920px; height: 1080px; display: flex; flex-direction: column; background: #2b2b2b; font-family: "Open Sans", "Noto Sans", sans-serif; font-size: 12px; white-space: nowrap; overflow: hidden; }
p, h3, h4 { margin: 0; font-weight: 400; }
svg, i { flex: none; display: block; }
button { font: inherit; padding: 0; border: 0; }
.windows { display: flex; height: 1040px; }

.chrome { width: 961px; height: 1040px; border: solid #2a2a35; border-width: 0 2px 1px 1px; border-right-color: #4c4f52; display: flex; flex-direction: column; background: #fff; }
.tabstrip { height: 43px; border-top: 1px solid #1b80d4; background: #dee1e6; display: flex; align-items: center; padding-left: 8px; }
.fav { width: 38px; height: 34px; display: flex; align-items: center; justify-content: center; margin-top: 8px; }
.fav.on { background: #fff; border-radius: 7px 7px 0 0; }
.fav text { font-family: Lato, sans-serif; font-weight: 900; font-size: 11px; }
.fe { fill: #b72667; } .fd { fill: #8a8c90; } .fx { fill: #1e9fe8; font-size: 12.5px !important; stroke: #1e9fe8; stroke-width: .5; }
.tsep { width: 1px; height: 20px; background: #8d9196; margin-left: 0; margin-top: 8px; }
.office { margin: 8px 0 0 12px; }
.ttitle { margin: 8px 0 0 10px; color: #5f6368; width: 97px; }
.tclose { margin: 8px 0 0 86px; }
.tsep.two { margin-left: 10px; }
.tplus { margin: 8px 0 0 16px; }
.wctl { margin: -14px 17px 0 auto; }
.toolbar { height: 37px; border-bottom: 1px solid #b6b6b6; display: flex; align-items: center; padding-left: 14px; }
.omni { margin-left: 13px; width: 774px; height: 28px; border-radius: 14px; background: #f1f3f4; display: flex; align-items: center; padding-left: 14px; }
.url { margin-left: 10px; width: 665px; font-size: 14px; color: #80868b; }
.url b { font-weight: 400; color: #202124; }
.zo { margin-left: 18px; } .st { margin-left: 17px; }
.avatar { width: 20px; height: 20px; border-radius: 50%; background: #689f38; color: #fff; margin-left: 12px; line-height: 20px; text-align: center; font-size: 11px; font-weight: 600; }
.dots { margin-left: 20px; }
.viewport { height: 893px; display: flex; overflow: hidden; }
.page { width: 941px; overflow: hidden; background: #fff; }
.frame { margin-left: 16px; width: 909px; height: 646px; border: solid #c8c8c8; border-width: 0 1px 1px; padding: 0 21px 0 22px; overflow: hidden; color: #313131; font-size: 12.8px; }
.li { height: 29px; line-height: 29px; margin-left: -1px; }
.li b { font-weight: 700; }
.li.first { margin-top: -10px; height: 28px; }
.hr { margin-top: 25px; height: 1px; background: #ddd; }
h3 { margin-top: 10px; height: 28px; line-height: 28px; font-size: 17px; color: #474747; }
.pts { margin-top: 5px; height: 20px; line-height: 20px; font-size: 11px; color: #5e5e5e; }
.q { margin-top: 11px; height: 22px; line-height: 22px; }
.opts { margin-top: 14px; display: flex; flex-direction: column; gap: 8px; }
.opt { height: 37px; border: 2px solid #e4e4e4; border-radius: 3px; display: flex; align-items: center; padding: 0 0 1px 10px; }
.opt.right { border-color: #008100; }
.radio { width: 9px; height: 9px; border-radius: 50%; background: #dcdcdc; box-shadow: 0 0 0 .8px #a0a0a0; margin-top: -2px; margin-right: 10.5px; }
.right .radio { background: radial-gradient(#555 0 2px, #dcdcdc 2.8px); }
.opt svg { margin-left: 4px; margin-top: -1px; }
.actions { margin-top: 41px; height: 48px; display: flex; }
.submit { width: 75px; height: 36px; background: #0075b4; color: #fff; border-radius: 2px; font-size: 13.5px; }
.used { margin-left: 9px; height: 32px; line-height: 32px; font-size: 11.5px; color: #5e5e5e; }
.act { display: flex; flex-direction: column; align-items: center; padding-top: 9px; margin-top: 3px; height: 45px; color: #0075b4; font-size: 11px; }
.act span { line-height: 20px; }
.save { margin-left: auto; width: 49px; border-right: 1px solid #e4e4e4; }
.show { width: 95px; }
.green { margin-top: 12px; height: 2px; background: #008100; }
.correct { height: 32px; display: flex; align-items: center; padding-left: 8px; gap: 12.500px; }
.pager { margin: 39px 0 0 336px; width: 192px; height: 35px; border: 1px solid #e4e4e4; border-radius: 2px; display: flex; }
.pg { width: 95px; display: flex; align-items: center; padding-left: 11px; font-size: 13px; border-right: 1px solid #e4e4e4; }
.pv { margin-left: 12px; }
.pg.nx { border: 0; padding-left: 23px; }
.nx svg { margin-left: 12px; }
.copy { height: 24px; line-height: 24px; width: 907px; text-align: right; font-size: 11px; color: #313131; }
footer { margin-top: 40px; height: 190px; border-top: 1px solid #e4e4e4; background: #fcfcfc; }
.logo { margin: 20px 0 0 41px; height: 36px; overflow: visible; }
.logo text { mix-blend-mode: multiply; }
.ld { fill: #8f9194; font: 900 48px Lato, sans-serif; } .le { fill: #b72667; font: 900 50px Lato, sans-serif; } .lx { fill: #1e9fdc; font: 700 47px "DejaVu Serif", serif; } .lr { fill: #1e9fdc; font: 400 7px "Open Sans", sans-serif; }
.cols { margin-top: 18px; display: flex; height: 108px; }
.col { border-right: 1px solid #ddd; color: #0075b4; }
.c1 { width: 203px; padding-left: 15px; } .c2 { width: 205px; padding-left: 18px; } .c3 { width: 206px; padding-left: 39px; }
h4 { height: 26px; color: #636363; font: 700 14.5px/26px "DejaVu Serif", serif; margin-bottom: 13.5px; }
.col a { display: block; height: 23px; line-height: 23px; font-size: 12.8px; }
.col a.wrap { margin-top: -4px; }
.social { padding: 12px 0 0 17px; }
.icons { display: flex; gap: 13.6px; }
.icons svg { width: 24px; height: 24px; fill: #0075b4; }
.icons .w { fill: #fff; }
.sf { font: 900 27px Lato, sans-serif; fill: #fff; } .yt { font: 700 9px "Liberation Sans", sans-serif; fill: #fff; } .yt.b { fill: #0075b4; } .li-t { font: 900 20px Lato, sans-serif; fill: #fff; }
.stores { margin-top: 35px; display: flex; gap: 12px; margin-left: -.5px; }
.store { height: 28px; background: #000; border: 1px solid #a6a6a6; border-radius: 4px; display: flex; align-items: center; color: #fff; }
.store div { display: flex; flex-direction: column; }
.store small { font-size: 6.5px; line-height: 8px; font-weight: 600; }
.store strong { line-height: 14px; font-size: 12.5px; font-weight: 600; }
.apple { width: 94px; padding-left: 7px; gap: 6px; }
.play { width: 80px; padding-left: 3px; gap: 2px; }
.play strong { font-weight: 400; font-family: Lato, sans-serif; }
.vbar { width: 17px; background: #f1f1f1; display: flex; flex-direction: column; align-items: center; }
.up { margin-top: 7px; border: solid transparent; border-width: 0 4px 4px; border-bottom-color: #505050; }
.vthumb { margin-top: 454px; width: 13px; height: 364px; background: #c1c1c1; }
.down { margin-top: 53px; border: solid transparent; border-width: 4px 4px 0; border-top-color: #505050; }
.hbar { height: 18px; border-bottom: 1px solid #b1b1b1; background: #f1f1f1; display: flex; align-items: center; }
.lf { margin-left: 6px; border: solid transparent; border-width: 4px 4px 4px 0; border-right-color: #a3a3a3; }
.hthumb { margin-left: 7px; width: 906px; height: 13px; background: #c1c1c1; }
.rt { margin-left: 8px; border: solid transparent; border-width: 4px 0 4px 4px; border-left-color: #505050; }
.corner { margin-left: auto; width: 17px; height: 17px; background: #dcdcdc; }
.downloads { flex: 1; display: flex; align-items: center; padding-left: 21px; }
.pbfile { margin-top: -1px; }
.dl { margin-left: 12px; width: 138px; font-size: 13px; color: #4a4d51; margin-top: 3px; }
.caret { margin-left: 15px; }
.dsep { margin-left: 18px; width: 1px; height: 36px; background: #c6c6c6; }
.showall { margin: 0 13px 0 613px; width: 78px; height: 32px; border: 1px solid #909498; border-radius: 4px; background: #fff; color: #3c4043; }

.pbi { width: 959px; border: solid #a0a0a0; border-width: 1px 1px 1px 0; display: flex; flex-direction: column; background: #fff; color: #222; }
.title { height: 30px; display: flex; align-items: flex-start; }
.qa { margin-top: 5px; }
.vt { margin: 3px 0 0 215px; width: 149px; height: 27px; line-height: 28px; text-align: center; background: #c1ef9b; color: #444; }
.cap { margin: 7px 0 0 13px; color: #999; width: 183px; line-height: 16px; }
.wctl2 { margin: 8px 16px 0 auto; }
.rtabs { height: 24px; border-bottom: 1px solid #d5d8db; display: flex; line-height: 24px; }
.rtabs > div { text-align: center; height: 24px; flex: none; }
.file { width: 56px; background: #1979ca; color: #fff; height: 23px !important; }
.rt1 { width: 77px; padding-right: 2px; } .rt2 { width: 53px; background: #f4f6f9; border: solid #d5d8db; border-width: 1px 1px 0; line-height: 23px; }
.rt3 { width: 80px; } .rt4 { width: 73px; padding-right: 4px; }
.rt5 { display: flex; width: 149px; gap: 29px; padding-left: 13px; border: solid #ccc; border-width: 0 1px; height: 18px !important; }
.user { margin-left: auto; display: flex; align-items: center; gap: 20px; padding-right: 4px; color: #111; }
.user i { width: 14px; height: 14px; border-radius: 50%; background: #0b74d4; color: #fff; font: 700 11px/14px "Open Sans", sans-serif; margin-top: -2px; margin-left: -12px; }
.user svg { margin-top: -1px; margin-right: 2px; }
.ribbon { height: 92px; background: #f4f6f9; border-bottom: 1px solid #d5d8db; display: flex; color: #333; }
.group { margin-top: 2px; height: 87px; border-right: 1px solid #dcdfe2; display: flex; flex-direction: column; }
.g1 { width: 97px; } .g2 { width: 370px; padding-left: 7px; }
.tools { display: flex; height: 70px; }
.tool { display: flex; flex-direction: column; align-items: center; line-height: 13px; padding-top: 6px; }
.tool > span { display: flex; align-items: center; gap: 3px; }
.tool svg { margin-bottom: 1px; }
.tool em { font-style: normal; }
.t1 { width: 52px; } .t2 { width: 32px; }
.t1 svg { margin-left: 9px; } .t2 svg { margin-left: -1px; }
.tri { border: solid transparent; border-width: 3px 3px 0; border-top-color: #222; }
.gname { height: 16px; line-height: 18px; text-align: center; color: #555; margin-top: auto; }
.g1 .gname { padding-right: 2px; } .g2 .gname { padding-right: 8px; }
.checks { display: flex; padding-top: 2px; }
.ck { display: flex; align-items: center; height: 22px; gap: 7px; }
.ck i { width: 13px; height: 13px; border: 1px solid #777; background: #fff; }
.work { height: 870px; display: flex; }
.rail { width: 42px; background: #212121; position: relative; padding: 13px 0 0 12px; display: flex; flex-direction: column; gap: 23px; }
.mark { position: absolute; left: 0; top: 0; width: 3px; height: 42px; background: #d6b110; }
main { width: 554px; display: flex; flex-direction: column; background: #eaeaea; }
.canvas { height: 834px; padding-top: 43px; }
.sheet { height: 739px; background: #fff; padding-top: 20px; box-shadow: 0 0 3px #ccc; }
.vtitle { height: 18px; line-height: 19px; padding-left: 2px; color: #a6a6a6; }
.arc { font-size: 10.5px; text-anchor: middle; fill: #222; letter-spacing: -.3px; }
.legend { height: 22px; display: flex; align-items: center; padding: 0 0 2px 2px; color: #222; font-size: 11px; }
.legend i { width: 10px; height: 10px; border-radius: 50%; margin-right: .5px; }
.sel { position: relative; margin: 3px 0 0 5px; width: 545px; height: 356px; border: 1px solid #c8c8c8; }
.shead { height: 17px; background: #fafafa; display: flex; align-items: center; padding-right: 6px; gap: 11px; }
.grip { margin: 0 0 0 263px; } .focus { margin-left: auto; }
.vtitle.s { padding-left: 4px; margin-top: 2px; height: 20px; line-height: 20px; }
.legend.s { margin-top: 3px; padding-left: 4px; }
.teal { background: #01b8aa; }
.radar { display: block; }
.rl text { font: 10.7px "Liberation Sans", sans-serif; fill: #111; }
.h { position: absolute; background: #999; }
.tl, .tr, .bl, .br { width: 9px; height: 9px; background: none; border: 0 solid #999; }
.tl { left: -2px; top: -2px; border-width: 4px 0 0 4px; } .tr { right: -2px; top: -2px; border-width: 4px 4px 0 0; }
.bl { left: -2px; bottom: -2px; border-width: 0 0 4px 4px; } .br { right: -2px; bottom: -2px; border-width: 0 4px 4px 0; }
.tc, .bc { width: 12px; height: 4px; left: 265px; } .tc { top: -2px; } .bc { bottom: -2px; }
.ml, .mr { width: 4px; height: 12px; top: 171px; } .ml { left: -2px; } .mr { right: -2px; }
.cthumb { margin: 44px 0 0 98px; width: 238px; height: 7px; background: #c8c8c8; }
.pages { height: 36px; border-top: 1px solid #fff; display: flex; }
.arrows { width: 40px; display: flex; align-items: center; justify-content: space-between; padding: 0 7px 0 6px; border-right: 1px solid #aaa; }
.al, .ar { border: solid transparent; } .al { border-width: 4px 4px 4px 0; border-right-color: #c4c4c4; } .ar { border-width: 4px 0 4px 4px; border-left-color: #c4c4c4; }
.pt { border-right: 1px solid #c8c8c8; text-align: center; line-height: 35px; color: #555; font-size: 12.500px; }
.pt + .pt { padding-left: 4px; }
.pt.on { background: #fff; border-bottom: 3px solid #f2c811; color: #333; }
.add { width: 39px; background: #f2c811; color: #777; text-align: center; font: 700 18px/32px "Open Sans", sans-serif; }
.pane { border-left: 1px solid #000; background: #444; color: #f0f0f0; display: flex; flex-direction: column; }
.viz { width: 181px; } .fields { width: 181px; }
.pane header { height: 48px; background: #212121; display: flex; align-items: center; justify-content: space-between; padding: 0 12px 1px; font-size: 14px; font-weight: 600; }
.grid { height: 148px; display: grid; grid-template-columns: repeat(6, 28px); grid-auto-rows: 24px; padding: 5px 0 0 9px; }
.cur { margin: -2px 0 0 -2px; } .more { margin-top: 7px; }
.n123 { font: 700 7.5px "Open Sans", sans-serif; fill: #4379b8; } .rr { font: 700 23px "Liberation Sans", sans-serif; fill: #6d9bcf; }
.vtabs { height: 36px; background: #212121; padding: 8px 0 0 22px; position: relative; }
.vtabs i { position: absolute; left: 12px; bottom: 0; width: 40px; height: 2px; background: #f2c811; }
.wells { height: 131px; }
.wl { height: 28px; line-height: 30px; padding-left: 12px; } .wl.y { margin-top: 4px; line-height: 30px; }
.dash { width: 170px; margin-left: 4px; border: 1px dashed #6a6a6a; border-radius: 3px; background: #4a4a4a; padding: 3px 2px; }
.d1 { height: 30px; } .d2 { height: 37px; }
.chip { height: 23px; border: 1px solid #1e1e1e; border-radius: 3px; background: #333; display: flex; align-items: center; padding: 0 4px; }
.chip i { margin-left: auto; margin-right: 9px; border: solid transparent; border-width: 4px 3.500px 0; border-top-color: #888; }
.sec { height: 36px; background: #212121; padding-left: 14px; line-height: 41px; font-size: 14px; font-weight: 600; }
.filters { height: 251px; }
.fl { height: 31px; line-height: 36px; padding-left: 16px; } .fl.two { height: 28px; line-height: 30px; }
.d3 { height: 108px; display: flex; flex-direction: column; gap: 2px; padding-top: 2px; }
.card { height: 46px; border: 1px solid #1e1e1e; border-radius: 3px; background: #333; padding: 2px 10px 0 8px; }
.card div { height: 19px; line-height: 18px; display: flex; justify-content: space-between; }
.card svg { margin-top: 4px; }
.drop { height: 26px; padding: 1px 8px; color: #b8b8b8; line-height: 23px; }
.sec.dr { line-height: 42px; }
.drill { flex: 1; }
.keep { height: 35px; line-height: 34px; padding-left: 9px; } .off { height: 22px; line-height: 12px; padding-left: 13px; display: flex; gap: 13px; }
.search { margin: 4px; width: 172px; height: 30px; border: 1px solid #000; background: #212121; display: flex; align-items: center; gap: 8px; padding-left: 11px; color: #aaa; font-size: 13px; box-shadow: 0 4px 0 #444, 0 5px 0 #333; }
.table { margin-top: 11px; height: 24px; display: flex; align-items: center; padding-left: 7px; color: #f2c811; }
.table i { border: solid transparent; border-width: 0 0 6px 6px; border-bottom-color: #ccc; margin-right: 11px; }
.table span { margin-left: 12px; }
.field { margin: 6px 0 0 4px; width: 169px; height: 22px; background: #666; border: 1px solid #555; border-radius: 2px; display: flex; align-items: center; padding-left: 28px; }
.field svg + svg { margin: 0 7px 0 5px; }
mark { background: #f2c811; color: #222; line-height: 16px; }
.status { height: 22px; background: #333; color: #fff; display: flex; justify-content: space-between; align-items: center; padding: 0 5px; font-size: 11px; }

.taskbar { height: 40px; background: #2b2b2b; display: flex; align-items: center; color: #fff; }
.win { margin-left: 16px; }
.find { margin-left: 16px; width: 344px; height: 40px; background: #f2f2f2; display: flex; align-items: center; color: #333; font-size: 15px; padding-left: 10px; }
.find i { width: 21px; height: 21px; border: 3px solid #111; border-radius: 50%; }
.find span { margin-left: 9px; margin-right: auto; }
.find svg { margin-right: 15px; }
.tv { margin-left: 16px; } .ex { margin-left: 31px; }
.tasks { display: flex; margin-left: 13px; height: 40px; gap: 8.500px; }
.task { height: 40px; border-bottom: 2px solid #76b9ed; display: flex; align-items: center; padding-left: 7px; gap: 5px; }
.task.active { background: #545454; padding-left: 11px; margin-right: -4.500px; }
.task.teams, .task.report { padding-left: 6px; gap: 4px; }
.tt { font: 700 13px "Open Sans", sans-serif; fill: #fff; } .nt { font: 700 11px "Open Sans", sans-serif; fill: #fff; }
.tray { margin-left: auto; display: flex; align-items: center; height: 40px; }
.tray .c { margin-left: 26px; } .tray .n { margin-left: 10px; } .tray .s { margin-left: 8px; }
.clock { width: 62px; margin-left: 6px; display: flex; flex-direction: column; align-items: center; line-height: 18px; }
.note { margin-left: 12px; }
.peek { width: 1px; height: 40px; background: #555; margin: 0 4px 0 9px; }
</style>
